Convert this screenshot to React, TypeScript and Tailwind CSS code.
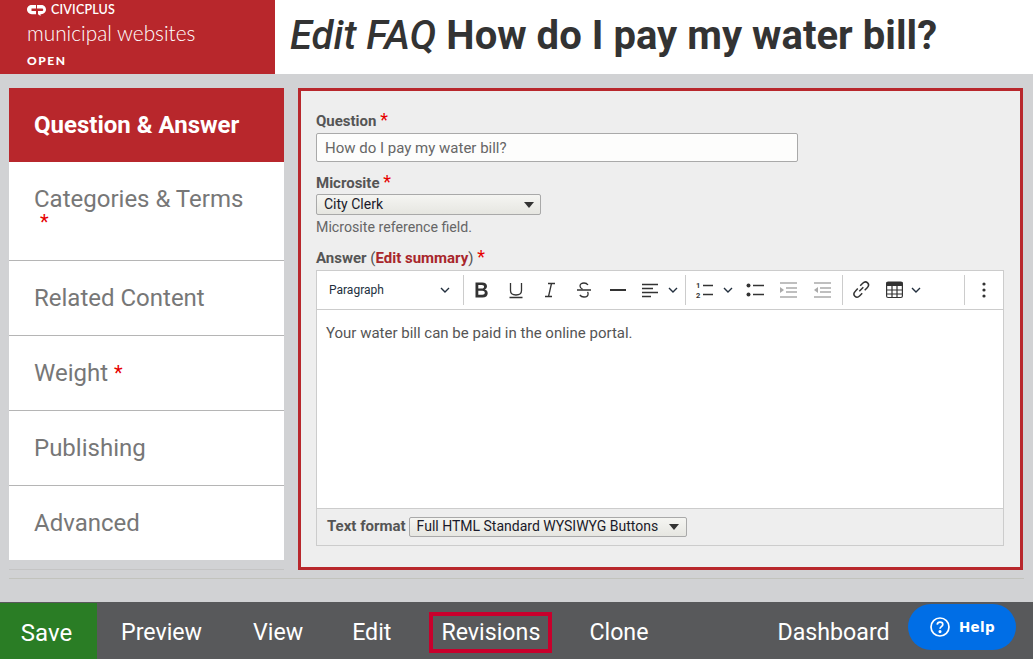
import React from "react";

const Star = ({ className = "" }: { className?: string }) => (
  <span className={"text-[#e60000] font-normal " + className}>*</span>
);

const Chevron = ({ className = "" }: { className?: string }) => (
  <svg width="10" height="6" viewBox="0 0 10 6" className={"shrink-0 " + className} fill="none" stroke="#222f3e" strokeWidth="1.4">
    <path d="M1 1l4 4 4-4" />
  </svg>
);

const Tb = ({ w = 20, children, className = "" }: { w?: number; children: React.ReactNode; className?: string }) => (
  <svg width={w} height="20" viewBox={`0 0 ${w} 20`} fill="none" stroke="#333" className={"shrink-0 " + className}>
    {children}
  </svg>
);

const Sep = ({ className = "" }: { className?: string }) => <div className={"w-px h-[30px] bg-[#ccc] shrink-0 " + className} />;

function Toolbar() {
  return (
    <div className="h-[39px] bg-white border-b border-[#ccc] flex items-center relative">
      <span className="ml-[12px] w-[111px] text-[12px] text-[#222f3e] shrink-0">Paragraph</span>
      <Chevron />
      <Sep className="ml-[13px]" />
      <Tb w={20} className="ml-[8px]"><path d="M3.500 2.500h6.700c3 0 4.800 1.500 4.800 3.800 0 1.500-.9 2.700-2.300 3.200 1.800.4 3 1.800 3 3.700 0 2.700-2 4.300-5.200 4.300H3.500z M6.300 4.900v3.600h3.500c1.500 0 2.300-.7 2.300-1.800s-.8-1.800-2.300-1.800z M6.300 10.700v4h4c1.600 0 2.500-.7 2.500-2s-.9-2-2.500-2z" fill="#333" stroke="none" fillRule="evenodd" /></Tb>
      <Tb w={20} className="ml-[14px]"><path d="M4.500 3v7.500c0 3 2 4.500 5.500 4.500s5.500-1.500 5.500-4.500V3M3.500 17.500h13" strokeWidth="1.300" /></Tb>
      <Tb w={20} className="ml-[14px]"><path d="M8 3.500h7M5 16.500h7M11.500 3.500l-3 13" strokeWidth="1.300" /></Tb>
      <Tb w={20} className="ml-[14px]"><path d="M14 5c-.8-1.200-2.200-2-4-2-2.300 0-4 1.200-4 3 0 1.200.7 2.300 2.500 3M3 10h14M13.500 12c.4.500.6 1 .6 1.700 0 1.900-1.800 3.300-4.100 3.300-1.900 0-3.300-.8-4.200-2" strokeWidth="1.300" /></Tb>
      <Tb w={20} className="ml-[14px]"><path d="M2 10h16" strokeWidth="2" /></Tb>
      <Tb w={16} className="ml-[14px]"><path d="M0 4.500h16M0 8.500h11M0 12.500h16M0 16.500h9" strokeWidth="1.400" /></Tb>
      <Chevron className="ml-[10px]" />
      <Sep className="ml-[7px]" />
      <svg width="18" height="20" viewBox="0 0 18 20" className="ml-[9px] shrink-0">
        <path d="M8 5.500h10M8 14.500h10" stroke="#333" strokeWidth="1.300" />
        <text x="1" y="8" fontSize="7.500" fontWeight="700" fill="#333" fontFamily="Roboto, sans-serif">1</text>
        <text x="1" y="18" fontSize="7.500" fontWeight="700" fill="#333" fontFamily="Roboto, sans-serif">2</text>
      </svg>
      <Chevron className="ml-[10px]" />
      <Tb w={18} className="ml-[13px]">
        <circle cx="2.500" cy="5.500" r="2" fill="#333" stroke="none" />
        <circle cx="2.500" cy="14.500" r="2" fill="#333" stroke="none" />
        <path d="M7 5.500h11M7 14.500h11" strokeWidth="1.300" />
      </Tb>
      <Tb w={17} className="ml-[16px]">
        <path d="M0 3h17M6 8h11M6 12h11M0 17h17" stroke="#aaa" strokeWidth="1.300" />
        <path d="M0 7l4 3-4 3z" fill="#aaa" stroke="none" />
      </Tb>
      <Tb w={17} className="ml-[17px]">
        <path d="M0 3h17M6 8h11M6 12h11M0 17h17" stroke="#aaa" strokeWidth="1.300" />
        <path d="M4 7l-4 3 4 3z" fill="#aaa" stroke="none" />
      </Tb>
      <Sep className="ml-[11px]" />
      <Tb w={18} className="ml-[9px]">
        <path d="M7.300 11.200l4-4M5.800 8.500l-2.500 2.700c-1.700 1.700-1.700 3.700-.4 5 1.300 1.300 3.300 1.200 4.900-.4l2.400-2.500M8.200 5.800l2.500-2.500c1.600-1.600 3.600-1.700 4.900-.4 1.300 1.300 1.200 3.300-.4 4.900l-2.500 2.500" strokeWidth="1.500" />
      </Tb>
      <svg width="17" height="18" viewBox="0 0 17 18" className="ml-[16px] shrink-0">
        <rect x="0.600" y="1" width="15.800" height="15.500" rx="1.500" fill="#fff" stroke="#333" strokeWidth="1.200" />
        <rect x="0.600" y="1" width="15.800" height="4" fill="#333" />
        <path d="M1 9h15M1 13h15M6 5v11M11 5v11" stroke="#333" strokeWidth="1.200" />
      </svg>
      <Chevron className="ml-[8px]" />
      <Sep className="ml-[43px]" />
      <svg width="4" height="16" viewBox="0 0 4 16" className="ml-[17px] shrink-0" fill="#333">
        <circle cx="2" cy="2" r="1.600" />
        <circle cx="2" cy="8" r="1.600" />
        <circle cx="2" cy="14" r="1.600" />
      </svg>
    </div>
  );
}

const Side = ({ children }: { children: React.ReactNode }) => (
  <div className="h-[75px] bg-white border-b border-[#b5b5b5] flex items-center pl-[25px] text-[24px] leading-[30px] text-[#777]">
    {children}
  </div>
);

const FootLink = ({ children, className = "" }: { children: React.ReactNode; className?: string }) => (
  <span className={"text-white text-[23.2px] leading-[28px] " + className}>{children}</span>
);

export default function App() {
  return (
    <div className="w-[1033px] h-[659px] overflow-hidden bg-[#d1d2d4] flex flex-col relative" style={{ fontFamily: "Roboto, sans-serif" }}>
      <header className="h-[74px] bg-white flex shrink-0">
        <div className="w-[275px] bg-[#b8272c] text-white pl-[27px] flex flex-col shrink-0">
          <div className="flex items-center mt-[3px] h-[14px]">
            <svg width="19" height="11" viewBox="0 0 19 11" fill="#fff">
              <path d="M9 0H4.800C2.100 0 0 2 0 4.600s2.100 4.600 4.800 4.600H9V6H4.500v-2.600H9z" />
              <path d="M10 0h4.200C16.900 0 19 2 19 4.600s-2.100 4.600-4.800 4.600h-.7V11l-2.500-1.800V6h3.800c.9 0 1.400-.3 1.400-1.300s-.5-1.300-1.400-1.300H10z" />
            </svg>
            <span className="ml-[5px] text-[12.500px] leading-[14px] font-semibold tracking-[0.2px]" style={{ fontFamily: "Lato, sans-serif" }}>CIVICPLUS</span>
          </div>
          <div className="text-[20.800px] leading-[26px] mt-[3px] font-light" style={{ fontFamily: "Lato, sans-serif" }}>municipal websites</div>
          <div className="text-[12px] leading-[14px] mt-[8px] font-black tracking-[1.500px]" style={{ fontFamily: "Lato, sans-serif" }}>OPEN</div>
        </div>
        <h1 className="ml-[15px] text-[40px] leading-[72px] font-bold text-[#333] whitespace-nowrap tracking-[0.03px]">
          <em className="font-medium">Edit FAQ</em> How do I pay my water bill?
        </h1>
      </header>

      <main className="flex pl-[9px] pr-[10px] pt-[14px] shrink-0">
        <nav className="w-[275px] shrink-0">
          <div className="h-[74px] bg-[#b8272c] flex items-center pl-[25px] text-[24px] font-bold text-white">Question &amp; Answer</div>
          <div className="h-[99px] bg-white border-b border-[#b5b5b5] pl-[25px] pt-[22px] text-[24px] leading-[30px] text-[#777]">
            Categories &amp; Terms
            <div className="-mt-[2px] ml-[6px] leading-[18px]"><Star className="text-[20px]" /></div>
          </div>
          <Side>Related Content</Side>
          <Side>Weight&nbsp;<Star className="text-[20px]" /></Side>
          <Side>Publishing</Side>
          <div className="h-[74px] bg-white flex items-center pl-[25px] text-[24px] text-[#777]">Advanced</div>
          <div className="h-px bg-[#c4c4c4] mt-[9px]" />
        </nav>

        <section className="ml-[14px] w-[725px] h-[482px] border-[3px] border-[#b8272c] bg-[#eeeeee] pl-[15px] pr-[16px] shrink-0">
          <div className="mt-[20px] h-[18px] text-[15px] leading-[18px] font-bold text-[#555]">
            Question <Star className="text-[18px]" />
          </div>
          <div className="mt-[4px] w-[482px] h-[29px] border border-[#a9a9a9] rounded-[2px] bg-[#fdfdfc] pl-[8px] text-[15px] leading-[29px] text-[#666]">
            How do I pay my water bill?
          </div>
          <div className="mt-[11px] h-[18px] text-[15px] leading-[18px] font-bold text-[#555]">
            Microsite <Star className="text-[18px]" />
          </div>
          <div className="mt-[3px] w-[225px] h-[21px] border border-[#a9a9a9] rounded-[2px] bg-gradient-to-b from-[#f5f5f2] to-[#e6e6e1] pl-[7px] pr-[5px] flex items-center justify-between text-[14px] text-[#1a1a2a]">
            <span className="-mt-[1px]">City Clerk</span>
            <span className="w-0 h-0 border-l-[5px] border-r-[5px] border-t-[6px] border-l-transparent border-r-transparent border-t-[#333] mr-[1px]" />
          </div>
          <div className="mt-[3px] h-[18px] text-[14.200px] leading-[18px] text-[#666]">Microsite reference field.</div>
          <div className="mt-[12px] h-[18px] text-[15px] leading-[18px] font-bold text-[#555]">
            Answer <span className="font-normal">(</span><span className="text-[#a8262b]">Edit summary</span><span className="font-normal">)</span> <Star className="text-[18px]" />
          </div>
          <div className="mt-[4px] w-[688px] border border-[#ccc]">
            <Toolbar />
            <div className="h-[198px] bg-white pl-[9px] pt-[13px] text-[15px] leading-[20px] text-[#555]">
              Your water bill can be paid in the online portal.
            </div>
            <div className="h-[37px] border-t border-[#ccc] bg-[#eeeeee] pl-[10px] flex items-center">
              <span className="-mt-[2px] text-[15px] font-bold text-[#555]">Text format</span>
              <div className="ml-[3px] w-[278px] h-[20px] border border-[#a9a9a9] rounded-[2px] bg-gradient-to-b from-[#f5f5f2] to-[#e6e6e1] pl-[7px] pr-[7px] flex items-center justify-between text-[14px] text-[#1a1a2a]">
                <span className="-mt-[1px]">Full HTML Standard WYSIWYG Buttons</span>
                <span className="w-0 h-0 border-l-[5px] border-r-[5px] border-t-[6px] border-l-transparent border-r-transparent border-t-[#333]" />
              </div>
            </div>
          </div>
        </section>
      </main>

      <div className="h-px bg-[#c2c3bd] mx-[9px] mt-[8px] shrink-0" />

      <footer className="mt-[23px] flex-1 bg-[#58595b] flex items-stretch">
        <div className="w-[97px] mt-px bg-[#2a7d25] flex items-center justify-center shrink-0 pt-[3px] pr-[4px]"><FootLink className="text-[24px]">Save</FootLink></div>
        <div className="flex items-center flex-1 pl-[24px] pt-[3px]">
          <FootLink>Preview</FootLink>
          <FootLink className="ml-[51px]">View</FootLink>
          <FootLink className="ml-[49px]">Edit</FootLink>
          <span className="ml-[38px] h-[41px] w-[123px] border-[4px] border-[#c8002c] flex items-center justify-center"><FootLink>Revisions</FootLink></span>
          <FootLink className="ml-[37px]">Clone</FootLink>
          <FootLink className="ml-[129px]">Dashboard</FootLink>
        </div>
      </footer>

      <div className="absolute left-[908px] top-[604px] w-[108px] h-[46px] rounded-[23px] bg-[#006ee6] flex items-center pl-[22px] text-white">
        <svg width="20" height="20" viewBox="0 0 20 20" fill="none" stroke="#fff" strokeWidth="1.700">
          <circle cx="10" cy="10" r="9" />
          <path d="M7.200 7.600c.2-1.500 1.300-2.400 2.800-2.400 1.600 0 2.800 1 2.800 2.300 0 2.100-2.800 2.200-2.800 4.300" />
          <circle cx="10" cy="14.600" r="0.700" fill="#fff" />
        </svg>
        <span className="ml-[9px] text-[13.500px] font-bold tracking-[0.3px]" style={{ fontFamily: "'DejaVu Sans', sans-serif" }}>Help</span>
      </div>
    </div>
  );
}
